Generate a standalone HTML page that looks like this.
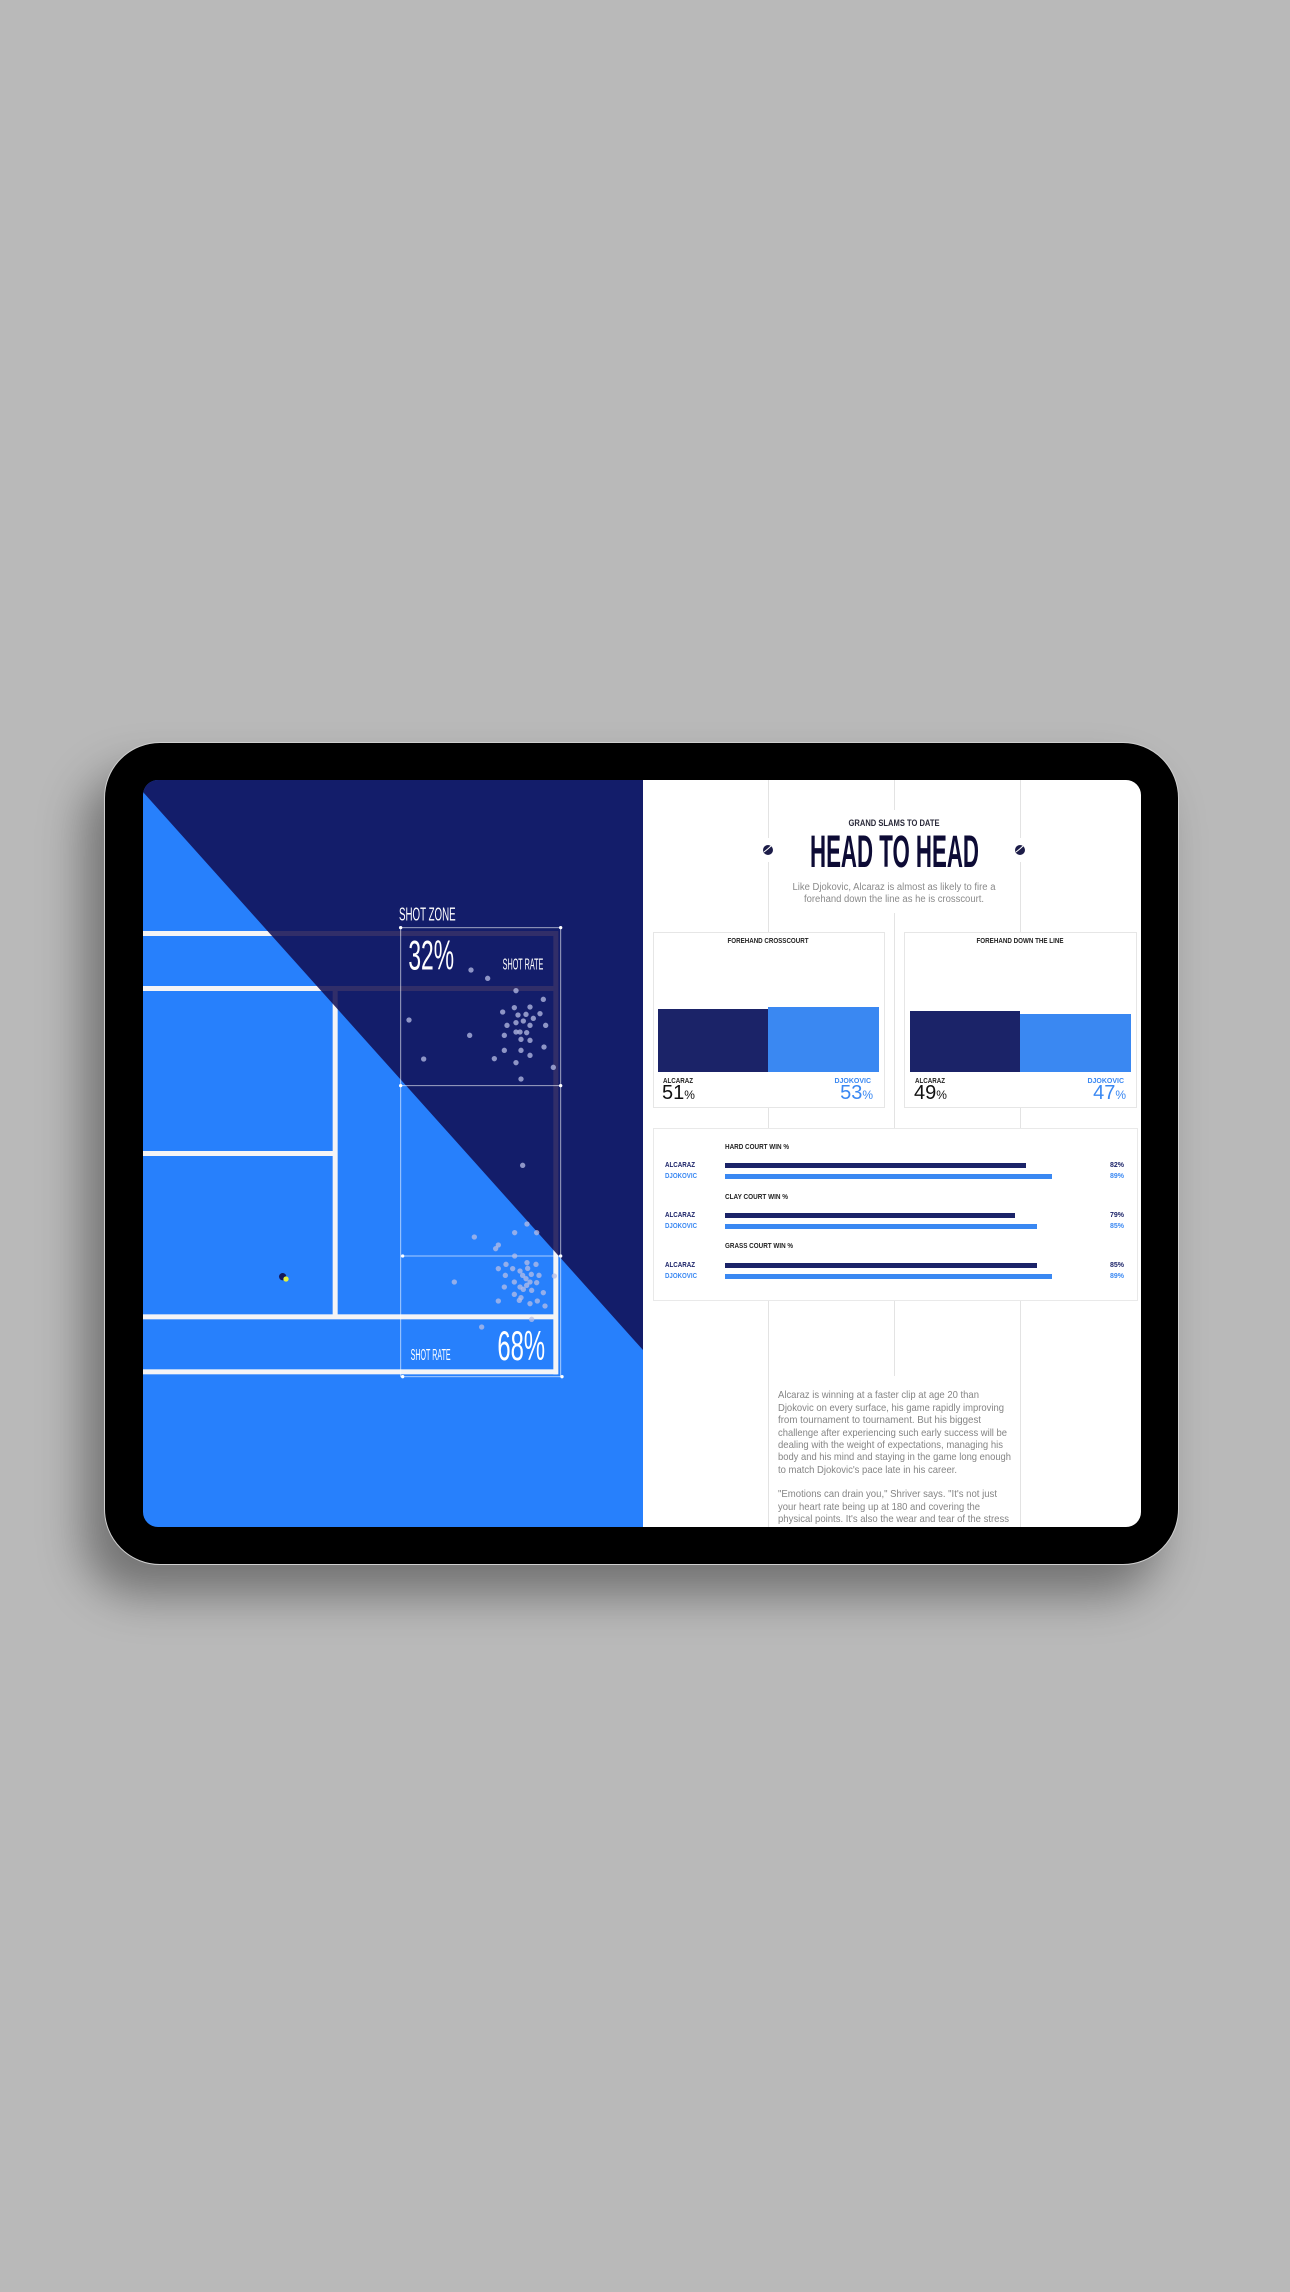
<!DOCTYPE html>
<html><head><meta charset="utf-8"><style>
html,body{margin:0;padding:0;background:#b9b9b9;width:1290px;height:2292px;overflow:hidden}
.tab{position:absolute;left:104px;top:742px;width:1075px;height:823px;border-radius:56px;background:#000;box-shadow:-20px 30px 45px rgba(0,0,0,.38);border:1px solid #cfcfcf;box-sizing:border-box}
svg{position:absolute;left:0;top:0}
</style></head><body>
<div class="tab"></div>
<svg width="1290" height="2292" viewBox="0 0 1290 2292" font-family="Liberation Sans, sans-serif">
<defs><clipPath id="scr"><rect x="143" y="780" width="998" height="747" rx="15"/></clipPath></defs>
<g clip-path="url(#scr)">
<rect x="143" y="780" width="500" height="747" fill="#2780fc"/>
<rect x="643" y="780" width="498" height="747" fill="#fff"/>
<g transform="translate(140,880) scale(0.33333)">
<g fill="#f4f4f6">
<rect x="0" y="153" width="1252" height="15"/>
<rect x="0" y="318" width="1252" height="15"/>
<rect x="0" y="813" width="585" height="15"/>
<rect x="0" y="1303" width="1252" height="15"/>
<rect x="0" y="1468" width="1252" height="15"/>
<rect x="578" y="325" width="15" height="985"/>
<rect x="1240" y="153" width="15" height="1330"/>
</g></g>
<polygon points="143,780 643,780 643,1350 143,792" fill="rgb(16,13,81)" opacity="0.86"/>
<g transform="translate(140,880) scale(0.33333)">
<g fill="none" stroke="#fff" stroke-opacity="0.6" stroke-width="3">
<rect x="782" y="143" width="480" height="1347"/>
<line x1="782" y1="617" x2="1262" y2="617"/>
<line x1="782" y1="1128" x2="1262" y2="1128"/>
</g>
<g fill="#fff"><circle cx="782" cy="143" r="5"/><circle cx="1262" cy="143" r="5"/><circle cx="782" cy="617" r="5"/><circle cx="1262" cy="617" r="5"/><circle cx="788" cy="1128" r="5"/><circle cx="1262" cy="1128" r="5"/><circle cx="788" cy="1490" r="5"/><circle cx="1266" cy="1490" r="5"/></g>
<g fill="#b8bde6" fill-opacity="0.75">
<circle cx="993" cy="270" r="8"/><circle cx="1043" cy="295" r="8"/><circle cx="1128" cy="332" r="8"/><circle cx="1210" cy="358" r="8"/><circle cx="1123" cy="383" r="8"/><circle cx="1170" cy="381" r="8"/><circle cx="1088" cy="396" r="8"/><circle cx="1134" cy="405" r="8"/><circle cx="1158" cy="403" r="8"/><circle cx="1200" cy="401" r="8"/><circle cx="1180" cy="415" r="8"/><circle cx="807" cy="420" r="8"/><circle cx="1101" cy="436" r="8"/><circle cx="1128" cy="428" r="8"/><circle cx="1150" cy="423" r="8"/><circle cx="1170" cy="436" r="8"/><circle cx="1217" cy="436" r="8"/><circle cx="1128" cy="456" r="8"/><circle cx="1140" cy="456" r="8"/><circle cx="1160" cy="458" r="8"/><circle cx="989" cy="466" r="8"/><circle cx="1093" cy="466" r="8"/><circle cx="1143" cy="478" r="8"/><circle cx="1170" cy="481" r="8"/><circle cx="1212" cy="501" r="8"/><circle cx="1093" cy="511" r="8"/><circle cx="1143" cy="511" r="8"/><circle cx="1170" cy="526" r="8"/><circle cx="851" cy="537" r="8"/><circle cx="1063" cy="536" r="8"/><circle cx="1128" cy="548" r="8"/><circle cx="1240" cy="562" r="8"/><circle cx="1143" cy="597" r="8"/><circle cx="1148" cy="856" r="8"/>
<circle cx="1161" cy="1032" r="8"/><circle cx="1124" cy="1058" r="8"/><circle cx="1190" cy="1058" r="8"/><circle cx="1003" cy="1071" r="8"/><circle cx="1075" cy="1095" r="8"/><circle cx="1067" cy="1106" r="8"/><circle cx="1124" cy="1128" r="8"/><circle cx="1098" cy="1153" r="8"/><circle cx="1161" cy="1148" r="8"/><circle cx="1188" cy="1153" r="8"/><circle cx="1075" cy="1166" r="8"/><circle cx="1118" cy="1166" r="8"/><circle cx="1140" cy="1173" r="8"/><circle cx="1163" cy="1165" r="8"/><circle cx="1096" cy="1186" r="8"/><circle cx="1148" cy="1186" r="8"/><circle cx="1174" cy="1183" r="8"/><circle cx="1197" cy="1186" r="8"/><circle cx="1243" cy="1188" r="8"/><circle cx="1158" cy="1196" r="8"/><circle cx="943" cy="1206" r="8"/><circle cx="1123" cy="1206" r="8"/><circle cx="1170" cy="1206" r="8"/><circle cx="1190" cy="1208" r="8"/><circle cx="1093" cy="1221" r="8"/><circle cx="1140" cy="1221" r="8"/><circle cx="1160" cy="1216" r="8"/><circle cx="1150" cy="1228" r="8"/><circle cx="1175" cy="1231" r="8"/><circle cx="1210" cy="1238" r="8"/><circle cx="1123" cy="1243" r="8"/><circle cx="1143" cy="1253" r="8"/><circle cx="1138" cy="1261" r="8"/><circle cx="1075" cy="1263" r="8"/><circle cx="1192" cy="1263" r="8"/><circle cx="1170" cy="1271" r="8"/><circle cx="1215" cy="1278" r="8"/><circle cx="1025" cy="1341" r="8"/><circle cx="1175" cy="1318" r="8"/>
</g>
<circle cx="428" cy="1190" r="11" fill="#14195a"/><circle cx="438" cy="1197" r="8" fill="#e4f03c"/>
<g fill="#fff">
<text x="777" y="122" font-size="56" textLength="170" lengthAdjust="spacingAndGlyphs">SHOT ZONE</text>
<text x="805" y="268" font-size="124" textLength="137" lengthAdjust="spacingAndGlyphs">32%</text>
<text x="1088" y="268" font-size="48" textLength="122" lengthAdjust="spacingAndGlyphs">SHOT RATE</text>
<text x="812" y="1440" font-size="48" textLength="120" lengthAdjust="spacingAndGlyphs">SHOT RATE</text>
<text x="1072" y="1440" font-size="124" textLength="143" lengthAdjust="spacingAndGlyphs">68%</text>
</g></g>
<!-- right panel -->
<g stroke="#e3e3e3" stroke-width="1">
<line x1="768.5" y1="780" x2="768.5" y2="838"/><line x1="768.5" y1="862" x2="768.5" y2="1527"/>
<line x1="1020.5" y1="780" x2="1020.5" y2="838"/><line x1="1020.5" y1="862" x2="1020.5" y2="1527"/>
<line x1="894.5" y1="780" x2="894.5" y2="810"/><line x1="894.5" y1="913" x2="894.5" y2="1376"/>
</g>
<text x="894" y="826" font-size="9" font-weight="bold" fill="#2a2a3a" text-anchor="middle" textLength="91" lengthAdjust="spacingAndGlyphs">GRAND SLAMS TO DATE</text>
<text x="810" y="867" font-size="45" font-weight="bold" fill="#0d0b35" textLength="169" lengthAdjust="spacingAndGlyphs">HEAD TO HEAD</text>
<g><circle cx="768" cy="850" r="5" fill="#1c1c48"/><path d="M764 852 Q768 849 771 846" stroke="#fff" stroke-width="1" fill="none"/>
<circle cx="1020" cy="850" r="5" fill="#1c1c48"/><path d="M1016 852 Q1020 849 1023 846" stroke="#fff" stroke-width="1" fill="none"/></g>
<text x="894" y="890" font-size="10" fill="#8a8a8a" text-anchor="middle" textLength="203" lengthAdjust="spacingAndGlyphs">Like Djokovic, Alcaraz is almost as likely to fire a</text>
<text x="894" y="902" font-size="10" fill="#8a8a8a" text-anchor="middle" textLength="180" lengthAdjust="spacingAndGlyphs">forehand down the line as he is crosscourt.</text>
<rect x="653.5" y="932.5" width="231" height="175" fill="#fff" stroke="#e6e6e6"/>
<rect x="904.5" y="932.5" width="232" height="175" fill="#fff" stroke="#e6e6e6"/>
<text x="768" y="943" font-size="7.5" font-weight="bold" fill="#222" text-anchor="middle" textLength="81" lengthAdjust="spacingAndGlyphs">FOREHAND CROSSCOURT</text>
<text x="1020" y="943" font-size="7.5" font-weight="bold" fill="#222" text-anchor="middle" textLength="87" lengthAdjust="spacingAndGlyphs">FOREHAND DOWN THE LINE</text>
<rect x="658" y="1009" width="110" height="63" fill="#1b2368"/>
<rect x="768" y="1007" width="111" height="65" fill="#3a88f2"/>
<rect x="910" y="1011" width="110" height="61" fill="#1b2368"/>
<rect x="1020" y="1014" width="111" height="58" fill="#3a88f2"/>
<g font-size="7" font-weight="bold">
<text x="663" y="1083" fill="#222" textLength="30" lengthAdjust="spacingAndGlyphs">ALCARAZ</text>
<text x="871" y="1083" fill="#3a88f2" text-anchor="end">DJOKOVIC</text>
<text x="915" y="1083" fill="#222" textLength="30" lengthAdjust="spacingAndGlyphs">ALCARAZ</text>
<text x="1124" y="1083" fill="#3a88f2" text-anchor="end">DJOKOVIC</text>
</g>
<text x="662" y="1099" font-size="20" fill="#111">51<tspan font-size="12">%</tspan></text>
<text x="873" y="1099" font-size="20" fill="#3a88f2" text-anchor="end">53<tspan font-size="12">%</tspan></text>
<text x="914" y="1099" font-size="20" fill="#111">49<tspan font-size="12">%</tspan></text>
<text x="1126" y="1099" font-size="20" fill="#3a88f2" text-anchor="end">47<tspan font-size="12">%</tspan></text>
<rect x="653.5" y="1128.5" width="484" height="172" fill="#fff" stroke="#e9e9e9"/>
<g font-size="7" font-weight="bold">
<text x="725" y="1149" fill="#222" textLength="64" lengthAdjust="spacingAndGlyphs">HARD COURT WIN %</text>
<text x="725" y="1199" fill="#222" textLength="63" lengthAdjust="spacingAndGlyphs">CLAY COURT WIN %</text>
<text x="725" y="1248" fill="#222" textLength="68" lengthAdjust="spacingAndGlyphs">GRASS COURT WIN %</text>
<text x="665" y="1167" fill="#1b2368" textLength="30" lengthAdjust="spacingAndGlyphs">ALCARAZ</text>
<text x="665" y="1178" fill="#3a88f2" textLength="32" lengthAdjust="spacingAndGlyphs">DJOKOVIC</text>
<text x="665" y="1217" fill="#1b2368" textLength="30" lengthAdjust="spacingAndGlyphs">ALCARAZ</text>
<text x="665" y="1228" fill="#3a88f2" textLength="32" lengthAdjust="spacingAndGlyphs">DJOKOVIC</text>
<text x="665" y="1267" fill="#1b2368" textLength="30" lengthAdjust="spacingAndGlyphs">ALCARAZ</text>
<text x="665" y="1278" fill="#3a88f2" textLength="32" lengthAdjust="spacingAndGlyphs">DJOKOVIC</text>
<text x="1124" y="1167" fill="#1b2368" text-anchor="end">82%</text>
<text x="1124" y="1178" fill="#3a88f2" text-anchor="end">89%</text>
<text x="1124" y="1217" fill="#1b2368" text-anchor="end">79%</text>
<text x="1124" y="1228" fill="#3a88f2" text-anchor="end">85%</text>
<text x="1124" y="1267" fill="#1b2368" text-anchor="end">85%</text>
<text x="1124" y="1278" fill="#3a88f2" text-anchor="end">89%</text>
</g>
<rect x="725" y="1163" width="301" height="5" fill="#1b2368"/>
<rect x="725" y="1174" width="327" height="5" fill="#3a88f2"/>
<rect x="725" y="1213" width="290" height="5" fill="#1b2368"/>
<rect x="725" y="1224" width="312" height="5" fill="#3a88f2"/>
<rect x="725" y="1263" width="312" height="5" fill="#1b2368"/>
<rect x="725" y="1274" width="327" height="5" fill="#3a88f2"/>
<g font-size="10.5" fill="#858585">
<text x="778" y="1398" textLength="201" lengthAdjust="spacingAndGlyphs">Alcaraz is winning at a faster clip at age 20 than</text>
<text x="778" y="1411" textLength="226" lengthAdjust="spacingAndGlyphs">Djokovic on every surface, his game rapidly improving</text>
<text x="778" y="1423" textLength="203" lengthAdjust="spacingAndGlyphs">from tournament to tournament. But his biggest</text>
<text x="778" y="1436" textLength="229" lengthAdjust="spacingAndGlyphs">challenge after experiencing such early success will be</text>
<text x="778" y="1448" textLength="225" lengthAdjust="spacingAndGlyphs">dealing with the weight of expectations, managing his</text>
<text x="778" y="1460" textLength="233" lengthAdjust="spacingAndGlyphs">body and his mind and staying in the game long enough</text>
<text x="778" y="1473" textLength="179" lengthAdjust="spacingAndGlyphs">to match Djokovic's pace late in his career.</text>
<text x="778" y="1497" textLength="219" lengthAdjust="spacingAndGlyphs">"Emotions can drain you," Shriver says. "It's not just</text>
<text x="778" y="1510" textLength="202" lengthAdjust="spacingAndGlyphs">your heart rate being up at 180 and covering the</text>
<text x="778" y="1522" textLength="231" lengthAdjust="spacingAndGlyphs">physical points. It's also the wear and tear of the stress</text>
</g>
</g>
</svg>
</body></html>
